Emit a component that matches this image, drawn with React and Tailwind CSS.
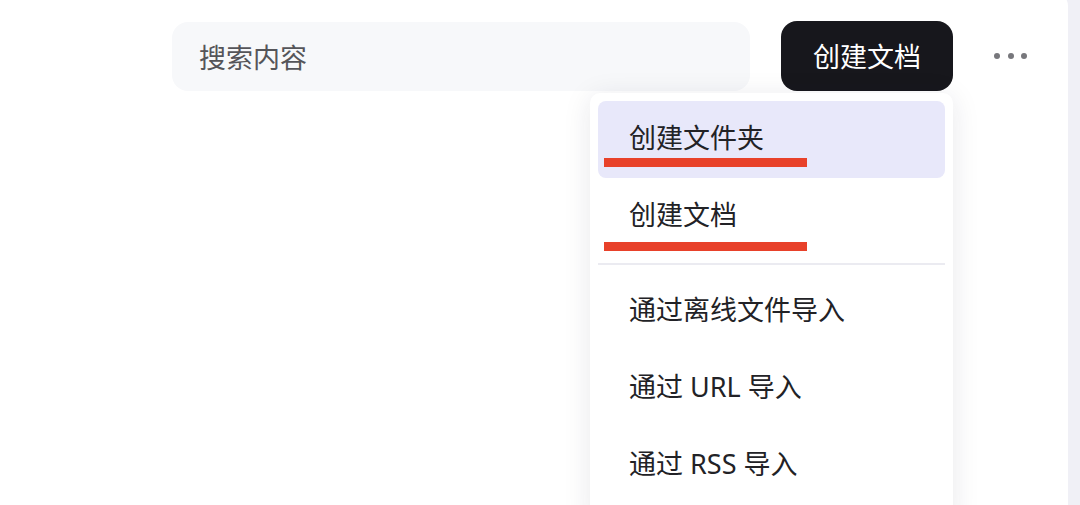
import React from "react";

const font = { fontFamily: '"Noto Sans", "Noto Sans CJK SC", sans-serif' };

function Item({ children, active, underlineTop }) {
  return (
    <div
      className={`relative flex h-[77px] items-center rounded-[8px] pb-[4px] pl-[31px] text-[27px] text-[#222226] ${
        active ? "bg-[#e8e8fa]" : ""
      }`}
    >
      <span className="leading-none">{children}</span>
      {underlineTop !== undefined && (
        <div
          className="absolute left-[6px] h-[9px] w-[203px] bg-[#e8412a]"
          style={{ top: underlineTop }}
        />
      )}
    </div>
  );
}

export default function App() {
  return (
    <div className="flex h-[505px] w-[1080px] overflow-hidden bg-[#f0f0f6]" style={font}>
      <div className="relative mt-[-8px] h-[520px] w-[1068px] rounded-tr-[14px] bg-white">
        <div className="flex items-start pl-[172px] pt-[29px]">
          <div className="mt-[1px] flex h-[69px] w-[578px] items-center rounded-[16px] bg-[#f7f8fa] pl-[27px] pt-[3px] text-[27px] text-[#555559]">
            搜索内容
          </div>
          <div className="ml-[31px] flex h-[70px] w-[172px] items-center justify-center rounded-[16px] bg-[#17171c] pt-[2px] text-[27px] text-white">
            创建文档
          </div>
          <div className="ml-[40px] flex h-[70px] items-center gap-[7.5px] pl-[1px]">
            <span className="h-[6px] w-[6px] rounded-full bg-[#77777c]" />
            <span className="h-[6px] w-[6px] rounded-full bg-[#77777c]" />
            <span className="h-[6px] w-[6px] rounded-full bg-[#77777c]" />
          </div>
        </div>

        <div className="absolute left-[590px] top-[101px] w-[363px] rounded-[10px] bg-white p-[8px] pb-[20px] shadow-[0_4px_28px_rgba(30,30,60,0.10)]">
          <Item active underlineTop={57}>创建文件夹</Item>
          <Item underlineTop={64}>创建文档</Item>
          <div className="my-[8px] h-[2px] bg-[#ebebf1]" />
          <Item>通过离线文件导入</Item>
          <Item>通过 URL 导入</Item>
          <Item>通过 RSS 导入</Item>
        </div>
      </div>
    </div>
  );
}
